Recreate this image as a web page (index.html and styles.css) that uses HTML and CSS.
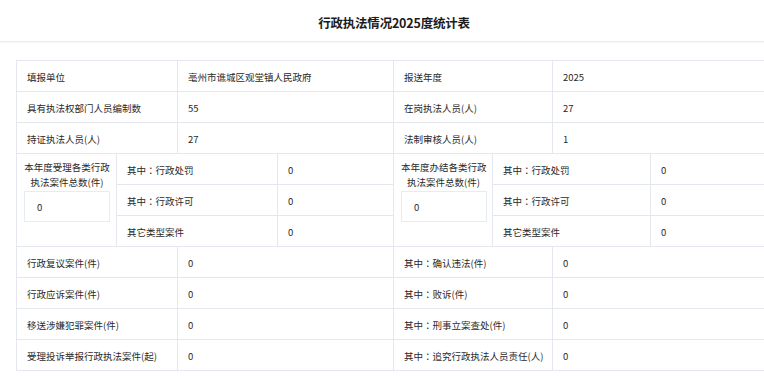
FILE: index.html
```html
<!DOCTYPE html>
<html lang="zh-CN">
<head>
<meta charset="utf-8">
<title>行政执法情况2025度统计表</title>
<link rel="stylesheet" href="styles.css">
</head>
<body>
<div class="page">
  <header class="head">
    <h1 class="title">行政执法情况2025度统计表</h1>
  </header>
  <div class="sheet">
    <div class="grid4">
      <div class="cell">填报单位</div>
      <div class="cell">亳州市谯城区观堂镇人民政府</div>
      <div class="cell">报送年度</div>
      <div class="cell">2025</div>
      <div class="cell">具有执法权部门人员编制数</div>
      <div class="cell">55</div>
      <div class="cell">在岗执法人员(人)</div>
      <div class="cell">27</div>
      <div class="cell">持证执法人员(人)</div>
      <div class="cell">27</div>
      <div class="cell">法制审核人员(人)</div>
      <div class="cell">1</div>
    </div>
    <div class="grid6">
      <div class="cell total">
        <div class="total-label">本年度受理各类行政<br>执法案件总数(件)</div>
        <div class="total-box">0</div>
      </div>
      <div class="cell">其中<span class="colon">：</span>行政处罚</div>
      <div class="cell">0</div>
      <div class="cell total">
        <div class="total-label">本年度办结各类行政<br>执法案件总数(件)</div>
        <div class="total-box">0</div>
      </div>
      <div class="cell">其中<span class="colon">：</span>行政处罚</div>
      <div class="cell">0</div>
      <div class="cell">其中<span class="colon">：</span>行政许可</div>
      <div class="cell">0</div>
      <div class="cell">其中<span class="colon">：</span>行政许可</div>
      <div class="cell">0</div>
      <div class="cell">其它类型案件</div>
      <div class="cell">0</div>
      <div class="cell">其它类型案件</div>
      <div class="cell">0</div>
    </div>
    <div class="grid4">
      <div class="cell">行政复议案件(件)</div>
      <div class="cell">0</div>
      <div class="cell">其中<span class="colon">：</span>确认违法(件)</div>
      <div class="cell">0</div>
      <div class="cell">行政应诉案件(件)</div>
      <div class="cell">0</div>
      <div class="cell">其中<span class="colon">：</span>败诉(件)</div>
      <div class="cell">0</div>
      <div class="cell">移送涉嫌犯罪案件(件)</div>
      <div class="cell">0</div>
      <div class="cell">其中<span class="colon">：</span>刑事立案查处(件)</div>
      <div class="cell">0</div>
      <div class="cell">受理投诉举报行政执法案件(起)</div>
      <div class="cell">0</div>
      <div class="cell">其中<span class="colon">：</span>追究行政执法人员责任(人)</div>
      <div class="cell">0</div>
    </div>
  </div>
</div>
</body>
</html>
```

FILE: styles.css
```css
html, body {
  margin: 0;
  padding: 0;
  background: #ffffff;
  overflow: hidden;
}

body {
  font-family: "Noto Sans CJK SC", "Noto Sans", sans-serif;
  color: #2a2a2a;
}

.page {
  width: 788px;
}

.head {
  height: 42px;
  border-bottom: 1px solid #e9ecf0;
  box-shadow: 0 1px 2px rgba(0, 0, 0, 0.04);
  display: flex;
  align-items: center;
  justify-content: center;
  box-sizing: border-box;
}

.title {
  margin: 0;
  font-size: 12.5px;
  font-weight: 700;
  color: #1c1c1c;
  letter-spacing: -0.2px;
  line-height: 1;
  padding-top: 6px;
}

.sheet {
  margin: 18px 0 0 16px;
  width: 756px;
  border-top: 1px solid #e4e8ee;
  border-left: 1px solid #e4e8ee;
}

.grid4 {
  display: grid;
  grid-template-columns: 161px 216px 159px 220px;
  grid-auto-rows: 31px;
}

.grid6 {
  display: grid;
  grid-template-columns: 100px 161px 116px 99px 158px 122px;
  grid-auto-rows: 31px;
}

.cell {
  box-sizing: border-box;
  border-right: 1px solid #e4e8ee;
  border-bottom: 1px solid #e4e8ee;
  font-size: 9.5px;
  line-height: 1;
  display: flex;
  align-items: center;
  padding: 3px 10px 0;
  white-space: nowrap;
}

.colon {
  font-family: "Noto Sans CJK TC", "Noto Sans CJK SC", sans-serif;
}

.total {
  grid-row: span 3;
  flex-direction: column;
  align-items: stretch;
  padding: 6px 6px 0 7px;
}

.total-label {
  text-align: center;
  line-height: 15px;
}

.total-box {
  margin-top: 1px;
  height: 31px;
  width: 86px;
  box-sizing: border-box;
  border: 1px solid #e8ebf0;
  display: flex;
  align-items: center;
  padding: 2px 0 0 12px;
}
```
